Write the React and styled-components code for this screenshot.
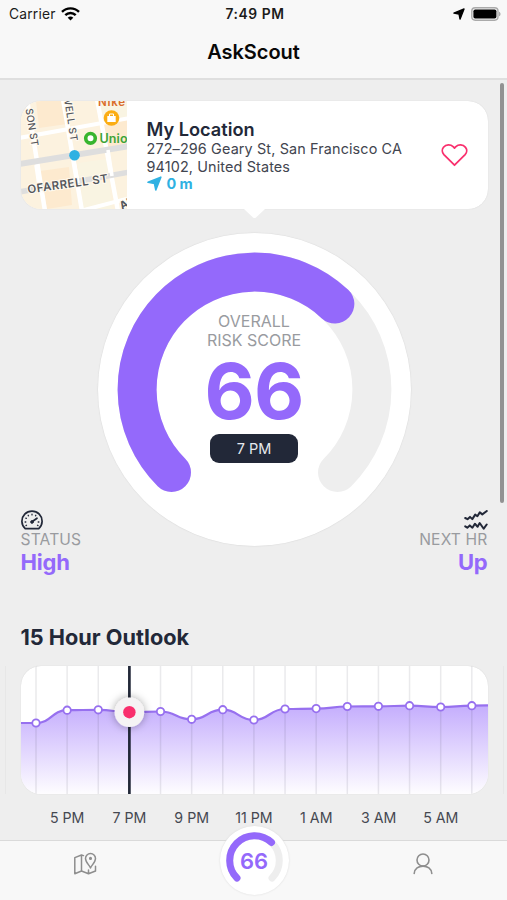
import React from "react";
import styled, { createGlobalStyle } from "styled-components";

const PURPLE = "#9469fb";
const INK = "#222838";
const PINK = "#f92f6d";
const BLUE = "#2fb1e2";
const TRACK = "#eeeeee";

const GlobalStyle = createGlobalStyle`
  * { box-sizing: border-box; }
  body {
    margin: 0;
    background: #eeeeee;
    font-family: Inter, "Liberation Sans", sans-serif;
    -webkit-font-smoothing: antialiased;
    overflow: hidden;
  }
  svg { display: block; }
`;

const Screen = styled.div`
  width: 507px;
  height: 900px;
  display: flex;
  flex-direction: column;
  overflow: hidden;
  background: #eeeeee;
`;

const Header = styled.header`
  height: 80px;
  flex: none;
  background: #f8f8f8;
  border-bottom: 2px solid #dfdfdf;
`;

const StatusBar = styled.div`
  height: 27px;
  padding: 0 6px 0 9px;
  display: grid;
  grid-template-columns: 1fr auto 1fr;
  align-items: center;
  font-size: 13.8px;
  letter-spacing: 0.2px;
  color: #1b1b1b;
`;

const StatusGroup = styled.div`
  display: flex;
  align-items: center;
  justify-content: ${(p) => (p.$end ? "flex-end" : "flex-start")};
  gap: ${(p) => (p.$end ? "6px" : "5.5px")};
`;

const Clock = styled.span`
  font-weight: 600;
  font-size: 13.8px;
  letter-spacing: 0.6px;
`;

const Title = styled.h1`
  margin: 0;
  height: 50px;
  line-height: 50px;
  text-align: center;
  font-size: 20px;
  font-weight: 600;
  letter-spacing: -0.05px;
  color: #080808;
`;

const Content = styled.main`
  flex: 1;
  min-height: 0;
  position: relative;
  padding: 21px 19.5px 0 20.5px;
  overflow: hidden;
`;

const ScrollThumb = styled.div`
  position: absolute;
  top: 3px;
  right: 3px;
  width: 4px;
  height: 420px;
  border-radius: 2px;
  background: #929292;
`;

const LocationCard = styled.section`
  position: relative;
  height: 108px;
  border-radius: 20px;
  background: #fff;
  box-shadow: 0 0 1px #c8c8c8;
  display: flex;
`;

const MapThumb = styled.div`
  width: 106.5px;
  flex: none;
  overflow: hidden;
  border-radius: 20px 0 0 20px;
`;

const LocationText = styled.div`
  flex: 1;
  padding: 17px 0 0 19.5px;
`;

const LocationName = styled.h2`
  margin: 0;
  font-size: 18.2px;
  line-height: 23px;
  font-weight: 600;
  color: ${INK};
`;

const Address = styled.p`
  margin: -1px 0 0;
  font-size: 14.4px;
  line-height: 17.5px;
  letter-spacing: 0.13px;
  color: #42454f;
`;

const Distance = styled.div`
  display: flex;
  align-items: center;
  gap: 5px;
  height: 17px;
  font-size: 14.4px;
  font-weight: 700;
  color: ${BLUE};
`;

const Favorite = styled.button`
  width: 66px;
  padding: 0;
  border: 0;
  background: none;
  display: flex;
  align-items: center;
  justify-content: center;
`;

const Pointer = styled.svg`
  position: absolute;
  top: 107.5px;
  left: 223px;
`;

const DialPanel = styled.section`
  width: 313px;
  height: 313px;
  margin: 24.4px auto 0;
  border-radius: 50%;
  background: #fff;
  box-shadow: 0 0 1px 0.5px #dedede;
  display: grid;
  & > * { grid-area: 1 / 1; }
`;

const DialText = styled.div`
  display: flex;
  flex-direction: column;
  align-items: center;
  padding-top: 78.6px;
`;

const DialCaption = styled.div`
  font-size: 16px;
  line-height: 19px;
  text-align: center;
  color: #999b9f;
`;

const DialCaptionLine = styled.div`
  height: 19px;
`;

const Score = styled.div`
  margin-top: 10px;
  height: 62px;
  line-height: 62px;
  font-size: 77.5px;
  font-weight: 700;
  letter-spacing: -0.8px;
  color: ${PURPLE};
`;

const TimePill = styled.div`
  margin-top: 12px;
  width: 88px;
  height: 29px;
  line-height: 29px;
  border-radius: 9px;
  text-align: center;
  font-size: 14.5px;
  background: ${INK};
  color: #e6e8ed;
`;

const Stats = styled.section`
  margin-top: -36.4px;
  display: flex;
  justify-content: space-between;
`;

const Stat = styled.div`
  display: flex;
  flex-direction: column;
  align-items: ${(p) => (p.$end ? "flex-end" : "flex-start")};
`;

const StatLabel = styled.div`
  margin-top: 1px;
  font-size: 15.6px;
  line-height: 18px;
  letter-spacing: 0.15px;
  color: #999b9f;
`;

const StatValue = styled.div`
  font-size: 22px;
  line-height: 27px;
  font-weight: 700;
  letter-spacing: -0.2px;
  color: ${PURPLE};
`;

const SectionTitle = styled.h2`
  margin: 48px 0 0;
  font-size: 21.7px;
  line-height: 26px;
  font-weight: 700;
  color: ${INK};
`;

const ChartStrip = styled.div`
  margin: 16px -19.5px 0 -20.5px;
  padding: 0 19.5px 0 20.5px;
  height: 128px;
  display: flex;
  background:
    linear-gradient(#e7e7e7, #e7e7e7) 5px 0 / 1px 100% no-repeat,
    linear-gradient(#e7e7e7, #e7e7e7) 503px 0 / 1px 100% no-repeat;
`;

const ChartCard = styled.div`
  flex: 1;
  border-radius: 20px;
  overflow: hidden;
  background: #fff;
  box-shadow: 0 0 1px #c8c8c8;
`;

const HourRow = styled.div`
  margin: 14px 15.5px 0;
  display: grid;
  grid-template-columns: repeat(7, 1fr);
  text-align: center;
  font-size: 14.2px;
  line-height: 19px;
  color: #454851;
`;

const TabBar = styled.nav`
  height: 60px;
  flex: none;
  display: grid;
  grid-template-columns: repeat(3, 1fr);
  justify-items: center;
  background: #f8f8f8;
  border-top: 1px solid #dadada;
`;

const Tab = styled.div`
  display: flex;
  align-items: center;
  justify-content: center;
  padding-bottom: 14px;
`;

const ScoreTab = styled.div`
  width: 69px;
  height: 69px;
  margin: -15px 0 0 1px;
  border-radius: 50%;
  background: #fff;
  box-shadow: 0 0 2px #d8d8d8;
  display: grid;
  z-index: 1;
  & > * { grid-area: 1 / 1; }
`;

const ScoreTabValue = styled.div`
  place-self: center;
  font-size: 22px;
  font-weight: 600;
  color: ${PURPLE};
`;

const SWEEP = 270;
const SCORE = 66;

function Gauge({ size, radius, stroke, value }) {
  const c = size / 2;
  const at = (percent) => {
    const angle = ((135 + (SWEEP * percent) / 100) * Math.PI) / 180;
    return `${c + radius * Math.cos(angle)} ${c + radius * Math.sin(angle)}`;
  };
  const largeArc = (SWEEP * value) / 100 > 180 ? 1 : 0;
  return (
    <svg width={size} height={size} fill="none" strokeWidth={stroke} strokeLinecap="round">
      <path d={`M${at(0)}A${radius} ${radius} 0 1 1 ${at(100)}`} stroke={TRACK} />
      <path d={`M${at(0)}A${radius} ${radius} 0 ${largeArc} 1 ${at(value)}`} stroke={PURPLE} />
    </svg>
  );
}

function WifiIcon() {
  return (
    <svg width="19" height="14" viewBox="0 0 19 14" fill="none" stroke="#000" strokeWidth="2.4">
      <path d="M1 4.9C5.7.2 13.3.2 18 4.9" />
      <path d="M4.3 8.2c2.9-2.9 7.5-2.9 10.4 0" />
      <path d="M9.5 13.5 6.7 10.7c1.6-1.5 4-1.5 5.6 0z" fill="#000" stroke="none" />
    </svg>
  );
}

function ArrowIcon({ size, color }) {
  return (
    <svg width={size} height={size} viewBox="0 0 14 14">
      <path
        d="M12.9 1.1 8.2 13 7 7 1 5.9z"
        fill={color}
        stroke={color}
        strokeWidth="1.5"
        strokeLinejoin="round"
      />
    </svg>
  );
}

function BatteryIcon() {
  return (
    <svg width="30" height="14" viewBox="0 0 30 14">
      <rect x=".8" y=".8" width="26.2" height="12.4" rx="3.4" fill="#f4f4f4" stroke="#aaa" strokeWidth="1.4" />
      <rect x="2.4" y="2.4" width="23" height="9.2" rx="1.8" fill="#000" />
      <path d="M28 4.7c2 .7 2 3.9 0 4.6z" fill="#aaa" />
    </svg>
  );
}

function HeartIcon() {
  return (
    <svg width="27" height="24" viewBox="0 0 27 24" fill="none" stroke={PINK} strokeWidth="1.8" strokeLinejoin="round">
      <path d="M13.5 22.2 2.9 11.6C1 9.6.8 6.4 2.5 4.3 5.1 1.2 9.6 1.4 12.1 3.7l1.4 1.3 1.4-1.3c2.5-2.3 7-2.5 9.6.6 1.7 2.1 1.5 5.3-.4 7.3z" />
    </svg>
  );
}

function SpeedIcon() {
  return (
    <svg width="22" height="20" viewBox="0 0 22 20" fill="none" stroke={INK} strokeLinecap="round">
      <path d="M4.2 18.7A10.1 10.1 0 1 1 17.8 18.7z" strokeWidth="1.7" strokeLinejoin="round" />
      <path d="M11 11.8 16 8.2" strokeWidth="1.7" />
      <circle cx="11" cy="12" r="1.4" fill={INK} strokeWidth=".8" />
      <path
        d="M11 4.2v.7M7.2 5.3l.3.5M4.8 8.2l.6.2M4.1 12h.7M5 15.6l.5-.3M14.8 5.3l-.3.5M17.9 12h-.7M17 15.6l-.5-.3"
        strokeWidth="1.3"
      />
    </svg>
  );
}

function TrendIcon() {
  return (
    <svg width="24" height="20" viewBox="0 0 24 20" fill="none" stroke={INK} strokeWidth="2" strokeLinecap="round" strokeLinejoin="round">
      <path d="M1.2 8 3.5 9.2 6 6.9l2.3 2.2L11.2 4.6 13.4 6.2l2.4-3.8 2.5 2L22.8 1" />
      <path d="M1.2 16.3 3.3 17.7 5.8 15.4l2.6 2.3 2.5-3.9 2.7 2.9 2.1-3.7 4 5.7 3-4.2" />
    </svg>
  );
}

function MapPinIcon() {
  return (
    <svg width="24" height="24" viewBox="0 0 24 24" fill="none" stroke="#8e8e8e" strokeWidth="1.5" strokeLinejoin="round" strokeLinecap="round">
      <path d="M10.5 3.6 8.5 3 1.8 5.6v16.2L8.5 19l7 2.8 7-2.8v-4.7M8.5 3v16M15.5 18v3.8" />
      <path d="M17.5 16c-1.3-3-5-5.9-5-9.5a5 5 0 0 1 10 0c0 3.6-3.7 6.5-5 9.5z" />
      <circle cx="17.5" cy="6.4" r=".8" />
    </svg>
  );
}

function PersonIcon() {
  return (
    <svg width="20" height="22" viewBox="0 0 20 22" fill="none" stroke="#8e8e8e" strokeWidth="1.6" strokeLinecap="round">
      <circle cx="10" cy="7" r="6" />
      <path d="M1.2 20.5c.5-9.9 17.1-9.9 17.6 0" />
    </svg>
  );
}

function StreetMap() {
  return (
    <svg width="107" height="108" viewBox="0 0 107 108" fontFamily="Inter, sans-serif">
      <rect width="107" height="108" fill="#fcf2df" />
      <path d="M15 0 43 0 46 23 18 27zM19 70 48 66 51 104 26 108zM82 22 107 18V46L85 49z" fill="#fdeacf" />
      <path d="M78 0h29v15L81 20zM57 62 86 58 88 73 58 78zM60 84l28-4 3 28H62z" fill="#f9f4e2" />
      <g fill="none" stroke="#fff">
        <path d="M-2 37 109 17" strokeWidth="4" />
        <path d="M6-2 24 110M42-2 61 110M76-2 97 110" strokeWidth="4.5" />
        <path d="M59 110 109 97" strokeWidth="4" />
      </g>
      <g fill="none" stroke="#dedede">
        <path d="M-2 63 109 45" strokeWidth="6" />
        <path d="M-2 91 109 71" strokeWidth="5.5" />
      </g>
      <path d="M15 64 19 91M52 54 57 82M87 49 91 75" stroke="#fff" strokeWidth="3.6" />
      <g fill="#55575c" fontSize="10" fontWeight="500" stroke="#fffaf0" strokeWidth="2" paintOrder="stroke">
        <text transform="translate(4.5 8) rotate(81)" textLength="38">SON ST</text>
        <text transform="translate(42.5 -5) rotate(81)" textLength="46">WELL ST</text>
        <text transform="translate(7 92.5) rotate(-8)" fontSize="11.5" fontWeight="600" textLength="81">OFARRELL ST</text>
        <text transform="translate(101 109) rotate(-28)" fontSize="11" fontWeight="700">AN</text>
      </g>
      <text x="77" y="5" fontSize="11.5" fontWeight="600" fill="#d96c2b" textLength="27">Nike</text>
      <circle cx="90.5" cy="17" r="7.8" fill="#fbad13" />
      <path d="M86.3 15h8.4v6h-8.4z" fill="#fff" />
      <path d="M88.5 15v-2h4v2" fill="none" stroke="#fff" />
      <circle cx="69.5" cy="37.3" r="4.8" fill="#fff" stroke="#38b52e" strokeWidth="3.6" />
      <text x="78.5" y="42" fontSize="12.5" fontWeight="600" fill="#3da438" textLength="28">Unio</text>
      <circle cx="53.5" cy="54.3" r="5.3" fill={BLUE} />
    </svg>
  );
}

const STEP = 31.13;
const LEVELS = [57, 44.2, 43.8, 46.2, 45.5, 53.3, 43.7, 54, 43, 42.6, 40.5, 40.3, 39.7, 41, 39.7];
const POINTS = LEVELS.map((y, i) => [15 + i * STEP, y]);

function buildLine() {
  let d = `M0 57L${POINTS[0][0]} ${POINTS[0][1]}`;
  for (let i = 1; i < POINTS.length; i++) {
    const [x0, y0] = POINTS[i - 1];
    const [x1, y1] = POINTS[i];
    const mid = (x0 + x1) / 2;
    d += `C${mid} ${y0} ${mid} ${y1} ${x1} ${y1}`;
  }
  return `${d}L467 39.4`;
}

function OutlookChart({ selected }) {
  const line = buildLine();
  const [sx, sy] = POINTS[selected];
  return (
    <svg width="467" height="128" viewBox="0 0 467 128">
      <defs>
        <linearGradient id="fill" gradientUnits="userSpaceOnUse" x1="0" y1="40" x2="0" y2="128">
          <stop offset="0" stopColor="#c5aefd" />
          <stop offset="1" stopColor="#fefdff" />
        </linearGradient>
        <filter id="knob" x="-50%" y="-50%" width="200%" height="200%">
          <feDropShadow dx="0" dy="0" stdDeviation="4" floodColor="#000" floodOpacity=".35" />
        </filter>
      </defs>
      <path d={`${line}V128H0z`} fill="url(#fill)" />
      {POINTS.map(([x]) => (
        <path key={x} d={`M${x} 0V128`} stroke="#3c3c50" strokeOpacity=".11" strokeWidth="1.5" />
      ))}
      <path d={line} fill="none" stroke="#9770ef" strokeWidth="2.2" />
      {POINTS.map(([x, y]) => (
        <circle key={x} cx={x} cy={y} r="3.7" fill="#fff" stroke="#9770ef" strokeWidth="1.8" />
      ))}
      <path d={`M${sx} 0V128`} stroke={INK} strokeWidth="2.7" />
      <circle cx={sx} cy={sy} r="14.8" fill="#f5f3f4" filter="url(#knob)" />
      <circle cx={sx} cy={sy} r="6.2" fill={PINK} />
    </svg>
  );
}

const HOURS = ["5 PM", "7 PM", "9 PM", "11 PM", "1 AM", "3 AM", "5 AM"];

export default function App() {
  return (
    <>
      <GlobalStyle />
      <Screen>
        <Header>
          <StatusBar>
            <StatusGroup>
              Carrier
              <WifiIcon />
            </StatusGroup>
            <Clock>7:49 PM</Clock>
            <StatusGroup $end>
              <ArrowIcon size={12} color="#000" />
              <BatteryIcon />
            </StatusGroup>
          </StatusBar>
          <Title>AskScout</Title>
        </Header>
        <Content>
          <LocationCard>
            <MapThumb>
              <StreetMap />
            </MapThumb>
            <LocationText>
              <LocationName>My Location</LocationName>
              <Address>
                272–296 Geary St, San Francisco CA
                <br />
                94102, United States
              </Address>
              <Distance>
                <ArrowIcon size={15} color={BLUE} />
                0 m
              </Distance>
            </LocationText>
            <Favorite aria-label="Favorite">
              <HeartIcon />
            </Favorite>
            <Pointer width="21" height="10" viewBox="0 0 21 10">
              <path d="M0 0H21L12 8.5Q10.5 9.7 9 8.5z" fill="#fff" />
            </Pointer>
          </LocationCard>
          <DialPanel>
            <Gauge size={313} radius={117.4} stroke={39} value={SCORE} />
            <DialText>
              <DialCaption>
                <DialCaptionLine>OVERALL</DialCaptionLine>
                <DialCaptionLine>RISK SCORE</DialCaptionLine>
              </DialCaption>
              <Score>{SCORE}</Score>
              <TimePill>7 PM</TimePill>
            </DialText>
          </DialPanel>
          <Stats>
            <Stat>
              <SpeedIcon />
              <StatLabel>STATUS</StatLabel>
              <StatValue>High</StatValue>
            </Stat>
            <Stat $end>
              <TrendIcon />
              <StatLabel>NEXT HR</StatLabel>
              <StatValue>Up</StatValue>
            </Stat>
          </Stats>
          <SectionTitle>15 Hour Outlook</SectionTitle>
          <ChartStrip>
            <ChartCard>
              <OutlookChart selected={3} />
            </ChartCard>
          </ChartStrip>
          <HourRow>
            {HOURS.map((hour) => (
              <span key={hour}>{hour}</span>
            ))}
          </HourRow>
          <ScrollThumb />
        </Content>
        <TabBar>
          <Tab>
            <MapPinIcon />
          </Tab>
          <ScoreTab>
            <Gauge size={69} radius={24.8} stroke={7} value={SCORE} />
            <ScoreTabValue>{SCORE}</ScoreTabValue>
          </ScoreTab>
          <Tab>
            <PersonIcon />
          </Tab>
        </TabBar>
      </Screen>
    </>
  );
}
